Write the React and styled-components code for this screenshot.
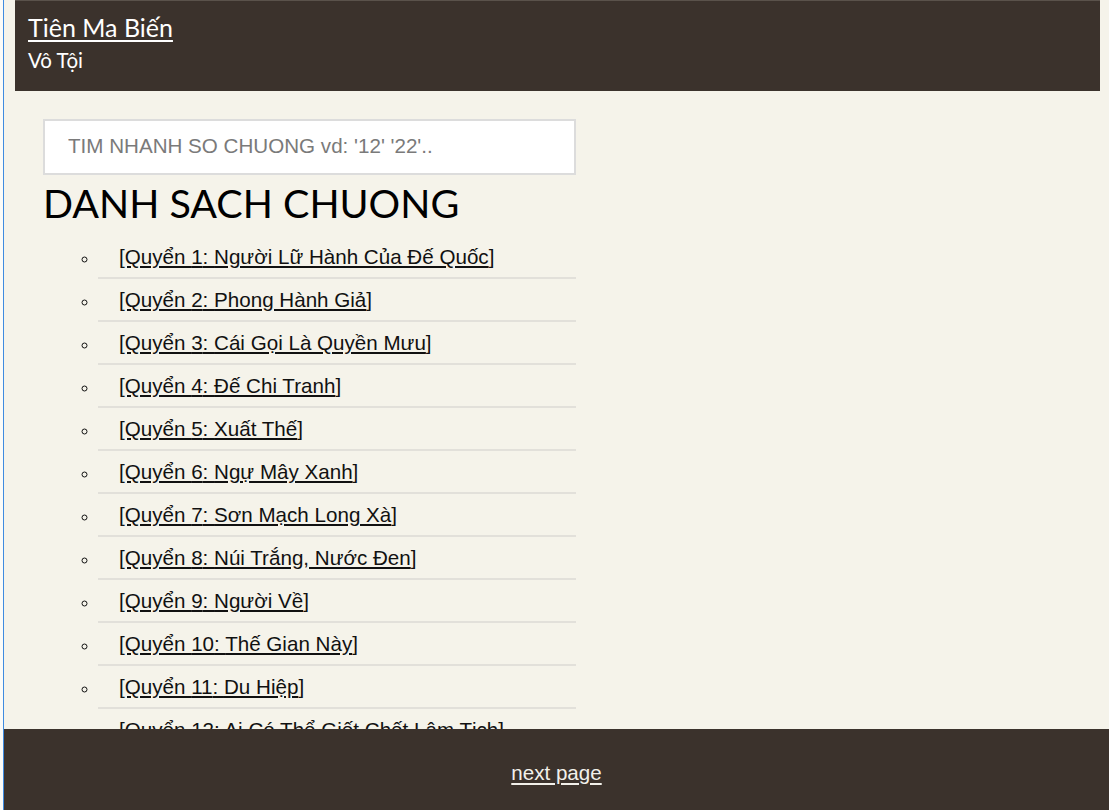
import styled, { createGlobalStyle } from 'styled-components';

const GlobalStyle = createGlobalStyle`
  html, body {
    margin: 0;
    padding: 0;
    background: #fbfbf8;
  }
  body {
    font-family: "Liberation Sans", Arial, sans-serif;
  }
`;

const Page = styled.div`
  margin-left: 3px;
  min-height: 100vh;
  border-left: 1px solid #3f8be0;
  background: #f5f3ea;
  padding-bottom: 90px;
`;

const Header = styled.header`
  margin: 0 9px 0 11px;
  padding: 12px 13px 0;
  height: 91px;
  box-sizing: border-box;
  background: #3b322c;
  border-top: 1px solid #5a524b;
  color: #fff;
  font-family: Lato, "Noto Sans", sans-serif;
`;

const Title = styled.a`
  display: inline-block;
  color: #fff;
  font-size: 25px;
  line-height: 28px;
  text-decoration: underline;
  text-underline-offset: 3px;
`;

const Author = styled.div`
  margin-top: 7px;
  font-size: 20.5px;
  line-height: 24px;
`;

const Main = styled.main`
  width: 533px;
  padding: 28px 0 0 39px;
`;

const Search = styled.input`
  display: block;
  width: 100%;
  height: 56px;
  box-sizing: border-box;
  padding: 0 23px 3px;
  border: 2px solid #dcdcdc;
  background: #fff;
  font-family: "Liberation Sans", Arial, sans-serif;
  font-size: 20.6px;
  outline: none;

  &::placeholder {
    color: #7a7a7a;
  }
`;

const Heading = styled.h1`
  margin: 4px 0 0;
  font-family: Lato, "Noto Sans", sans-serif;
  font-weight: 400;
  font-size: 39.5px;
  line-height: 48px;
  color: #000;
`;

const ChapterList = styled.ul`
  list-style: circle;
  margin: 9px 0 0;
  padding-left: 55px;
`;

const Chapter = styled.li`
  padding: 10px 0 9px 21px;
  border-bottom: 2px solid #e2e0da;
  font-size: 20.6px;
  line-height: 22px;
  color: #111;

  &::marker {
    font-size: 16px;
  }
`;

const ChapterLink = styled.a`
  color: #111;
  text-decoration: underline;
  text-underline-offset: 2px;
`;

const Footer = styled.footer`
  position: fixed;
  left: 4px;
  right: 0;
  bottom: 0;
  height: 81px;
  display: flex;
  align-items: center;
  justify-content: center;
  padding-top: 6px;
  box-sizing: border-box;
  background: #3b322c;
`;

const NextLink = styled.a`
  color: #f2f0ea;
  font-size: 20.6px;
  text-decoration: underline;
  text-underline-offset: 3px;
`;

const chapters = [
  'Người Lữ Hành Của Đế Quốc',
  'Phong Hành Giả',
  'Cái Gọi Là Quyền Mưu',
  'Đế Chi Tranh',
  'Xuất Thế',
  'Ngự Mây Xanh',
  'Sơn Mạch Long Xà',
  'Núi Trắng, Nước Đen',
  'Người Về',
  'Thế Gian Này',
  'Du Hiệp',
  'Ai Có Thể Giết Chết Lâm Tịch',
];

const App = () => (
  <Page>
    <GlobalStyle />
    <Header>
      <Title href="#">Tiên Ma Biến</Title>
      <Author>Vô Tội</Author>
    </Header>
    <Main>
      <Search type="text" placeholder="TIM NHANH SO CHUONG vd: '12' '22'.." aria-label="Tìm nhanh số chương" />
      <Heading>DANH SACH CHUONG</Heading>
      <ChapterList>
        {chapters.map((name, i) => (
          <Chapter key={name}>
            <ChapterLink href="#">[Quyển {i + 1}: {name}]</ChapterLink>
          </Chapter>
        ))}
      </ChapterList>
    </Main>
    <Footer>
      <NextLink href="#">next page</NextLink>
    </Footer>
  </Page>
);

export default App;
